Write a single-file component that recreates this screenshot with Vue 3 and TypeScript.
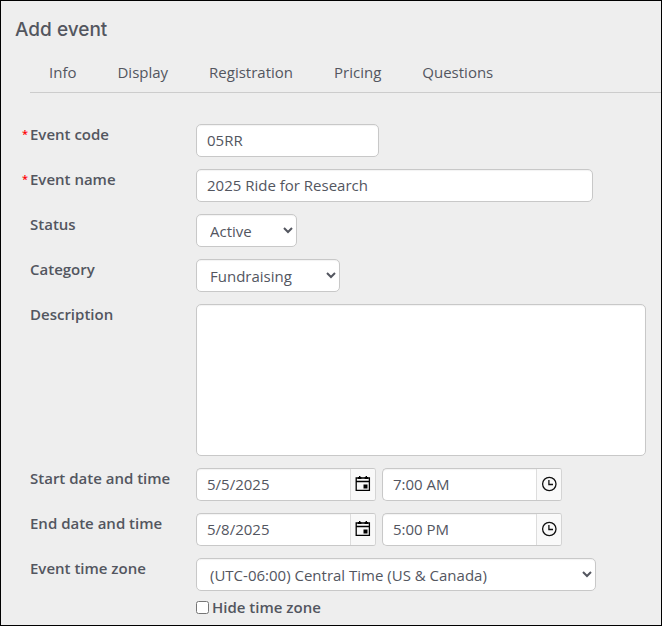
<script setup lang="ts">
import { ref } from 'vue'

const tabs: string[] = ['Info', 'Display', 'Registration', 'Pricing', 'Questions']

const code = ref('05RR')
const name = ref('2025 Ride for Research')
const status = ref('Active')
const category = ref('Fundraising')
const description = ref('')
const timeZone = ref('(UTC-06:00) Central Time (US & Canada)')
const hideTimeZone = ref(false)

interface Schedule {
  id: string
  label: string
  date: string
  time: string
}

const schedule = ref<Schedule[]>([
  { id: 'start', label: 'Start date and time', date: '5/5/2025', time: '7:00 AM' },
  { id: 'end', label: 'End date and time', date: '5/8/2025', time: '5:00 PM' },
])
</script>

<template>
  <main class="page">
    <h1 class="title">Add event</h1>
    <nav class="tabs">
      <a v-for="tab in tabs" :key="tab" class="tab" href="#">{{ tab }}</a>
    </nav>

    <form class="form" @submit.prevent>
      <div class="row">
        <label class="label" for="code"><span class="star">*</span>Event code</label>
        <input id="code" v-model="code" class="field code" type="text" required />
      </div>
      <div class="row">
        <label class="label" for="name"><span class="star">*</span>Event name</label>
        <input id="name" v-model="name" class="field name" type="text" required />
      </div>
      <div class="row">
        <label class="label" for="status"><span class="star"></span>Status</label>
        <select id="status" v-model="status" class="field select status">
          <option>Active</option>
        </select>
      </div>
      <div class="row">
        <label class="label" for="category"><span class="star"></span>Category</label>
        <select id="category" v-model="category" class="field select category">
          <option>Fundraising</option>
        </select>
      </div>
      <div class="row">
        <label class="label" for="description"><span class="star"></span>Description</label>
        <textarea id="description" v-model="description" class="field description"></textarea>
      </div>
      <div v-for="item in schedule" :key="item.id" class="row">
        <label class="label" :for="item.id + '-date'"><span class="star"></span>{{ item.label }}</label>
        <div class="pickers">
          <div class="picker">
            <input :id="item.id + '-date'" v-model="item.date" class="picker-input" type="text" />
            <button class="picker-button" type="button" aria-label="Choose date">
              <svg width="16" height="16" viewBox="0 0 16 16">
                <path fill="none" stroke="#000" stroke-width="1.3" d="M1.2 2h13.2v12.4H1.2zM1.2 5.5h13.2" />
                <path d="M4 0h1.4v1h1v2H3V1h1zM10.6 0H12v1h1v2H9.600V1h1zM8.500 8.500h4v4h-4z" />
              </svg>
            </button>
          </div>
          <div class="picker">
            <input v-model="item.time" class="picker-input" type="text" :aria-label="item.label" />
            <button class="picker-button" type="button" aria-label="Choose time">
              <svg width="16" height="16" viewBox="0 0 16 16" fill="none" stroke="#111" stroke-width="1.3">
                <circle cx="8.3" cy="8" r="6.700" />
                <path d="M7.900 4V8.500H12" />
              </svg>
            </button>
          </div>
        </div>
      </div>
      <div class="row">
        <label class="label" for="zone"><span class="star"></span>Event time zone</label>
        <div class="zone-group">
          <select id="zone" v-model="timeZone" class="field select zone">
            <option>(UTC-06:00) Central Time (US &amp; Canada)</option>
          </select>
          <label class="check"><input v-model="hideTimeZone" class="checkbox" type="checkbox" />Hide time zone</label>
        </div>
      </div>
    </form>
  </main>
</template>

<style>
body {
  background: #eee;
}
</style>

<style scoped>
.page {
  box-sizing: border-box;
  min-height: 100vh;
  border: 1px solid #000;
  background: #eee;
  color: #53565f;
  font: 15px/20px "Open Sans", sans-serif;
}
.title {
  margin: 0;
  padding: 17px 14px 15px;
  font: 500 19px/24px Inter, sans-serif;
}
.tabs {
  display: flex;
  gap: 41px;
  margin-left: 29px;
  padding: 0 19px 5px;
  border-bottom: 1px solid #ccc;
}
.tab {
  line-height: 30px;
  color: inherit;
  text-decoration: none;
}
.form {
  display: flex;
  flex-direction: column;
  gap: 12px;
  padding: 31px 15px 8px 21px;
}
.row {
  display: grid;
  grid-template-columns: 174px minmax(0, 1fr);
  align-items: start;
}
.label {
  display: flex;
  font-weight: 600;
}
.star {
  width: 8px;
  flex: none;
  color: #f00;
  font-size: 11px;
}
.field {
  box-sizing: border-box;
  width: 100%;
  height: 33px;
  margin: 0;
  padding: 0 10px 2px;
  border: 1px solid #c8c8c8;
  border-radius: 5px;
  background-color: #fff;
  box-shadow: inset 0 1px 1px #0000000d;
  color: inherit;
  font: inherit;
}
.code {
  max-width: 183px;
}
.name {
  max-width: 397px;
}
.select {
  padding: 0 1px 0 9px;
}
.status {
  max-width: 101px;
}
.category {
  max-width: 144px;
}
.zone {
  max-width: 400px;
}
.description {
  display: block;
  height: 152px;
  padding: 6px 10px;
  resize: none;
}
.pickers {
  display: flex;
  gap: 6px;
}
.picker {
  display: flex;
  box-sizing: border-box;
  flex: 0 1 180px;
  height: 33px;
  min-width: 0;
  border: 1px solid #c8c8c8;
  border-right-color: #d4d4d4;
  border-radius: 5px 3px 3px 5px;
  background: #fff;
  box-shadow: inset 0 1px 1px #0000000d;
  overflow: hidden;
}
.picker-input {
  flex: 1;
  min-width: 0;
  padding: 0 10px 2px;
  border: 0;
  background: transparent;
  color: inherit;
  font: inherit;
}
.picker-button {
  display: flex;
  align-items: center;
  justify-content: center;
  width: 25px;
  padding: 0 0 2px;
  border: 0;
  border-left: 1px solid #ddd;
  background: #f9f9f9;
}
.zone-group {
  display: flex;
  flex-direction: column;
  gap: 6px;
}
.check {
  display: flex;
  align-items: center;
  gap: 3px;
  font-weight: 600;
}
.checkbox {
  width: 13px;
  height: 13px;
  margin: 0;
}
</style>
